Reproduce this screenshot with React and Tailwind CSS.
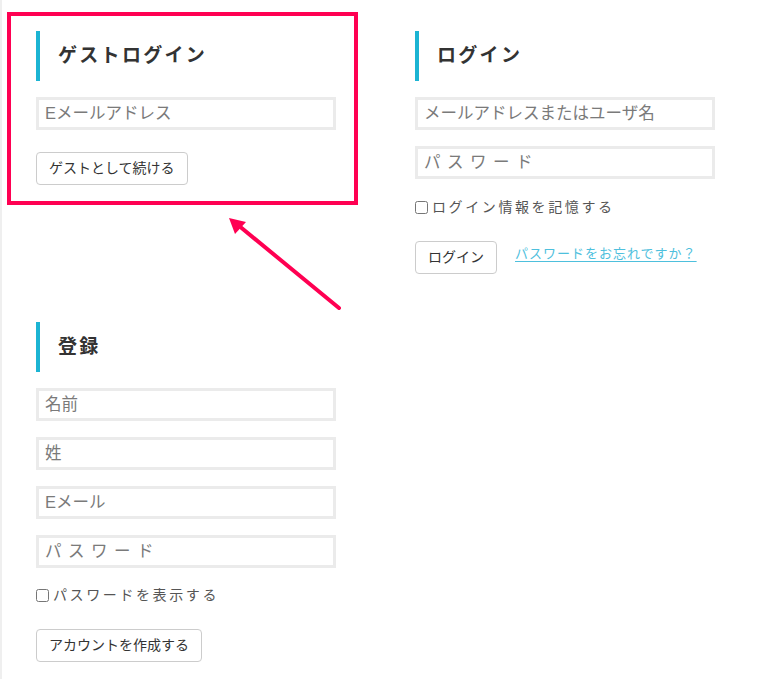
import React from 'react';

const font = { fontFamily: '"Liberation Sans", "Noto Sans CJK JP", sans-serif' };

const SectionTitle = ({ children }) => (
  <div className="flex items-center h-[50px] border-l-4 border-[#1cb4d3] pl-[18px]">
    <h2 className="text-[19px] font-bold tracking-[2.3px] text-[#333]">{children}</h2>
  </div>
);

const Field = ({ placeholder, wide = false }) => (
  <input
    type="text"
    placeholder={placeholder}
    className={`block w-[300px] h-[33px] border-[3px] border-[#ebebeb] bg-white px-[6px] text-[16.5px] text-[#333] outline-none placeholder:text-[#7a7a7a] ${wide ? 'tracking-[6.5px]' : ''}`}
  />
);

const Btn = ({ children }) => (
  <button className="h-[33px] px-[12px] rounded-[4px] border border-[#cccccc] bg-white text-[14px] text-[#333]">
    {children}
  </button>
);

const Check = ({ label }) => (
  <label className="flex items-center gap-[4px] text-[14px] tracking-[2.6px] text-[#555]">
    <input type="checkbox" className="w-[13px] h-[13px] m-0" />
    <span>{label}</span>
  </label>
);

export default function App() {
  return (
    <div className="relative w-[782px] h-[679px] bg-white border-l-2 border-[#efefef]" style={font}>
      <div className="flex gap-[79px] pl-[34px] pt-[31px]">
        {/* left column */}
        <div className="w-[300px] flex flex-col">
          <SectionTitle>ゲストログイン</SectionTitle>
          <div className="mt-[16px]">
            <Field placeholder="Eメールアドレス" />
          </div>
          <div className="mt-[22px]">
            <Btn>ゲストとして続ける</Btn>
          </div>

          <div className="mt-[137px]">
            <SectionTitle>登録</SectionTitle>
          </div>
          <div className="mt-[16px] flex flex-col gap-[16px]">
            <Field placeholder="名前" />
            <Field placeholder="姓" />
            <Field placeholder="Eメール" />
            <Field placeholder="パスワード" wide />
          </div>
          <div className="mt-[17px]">
            <Check label="パスワードを表示する" />
          </div>
          <div className="mt-[23px]">
            <Btn>アカウントを作成する</Btn>
          </div>
        </div>

        {/* right column */}
        <div className="w-[300px] flex flex-col">
          <SectionTitle>ログイン</SectionTitle>
          <div className="mt-[16px] flex flex-col gap-[16px]">
            <Field placeholder="メールアドレスまたはユーザ名" />
            <Field placeholder="パスワード" wide />
          </div>
          <div className="mt-[18px]">
            <Check label="ログイン情報を記憶する" />
          </div>
          <div className="mt-[23px] flex items-start gap-[18px]">
            <Btn>ログイン</Btn>
            <a href="#" className="mt-[3px] text-[13px] tracking-[1px] text-[#4ec0dd] underline underline-offset-[3px]">
              パスワードをお忘れですか？
            </a>
          </div>
        </div>
      </div>

      {/* annotation overlay */}
      <div className="absolute left-[5px] top-[12px] w-[351px] h-[193px] border-4 border-[#ff0052] pointer-events-none" />
      <svg className="absolute left-0 top-0 pointer-events-none" width="782" height="679">
        <line x1="337" y1="308" x2="236" y2="225" stroke="#ff0052" strokeWidth="4" strokeLinecap="round" />
        <polygon points="227,218 244,222 233,234" fill="#ff0052" />
      </svg>
    </div>
  );
}
